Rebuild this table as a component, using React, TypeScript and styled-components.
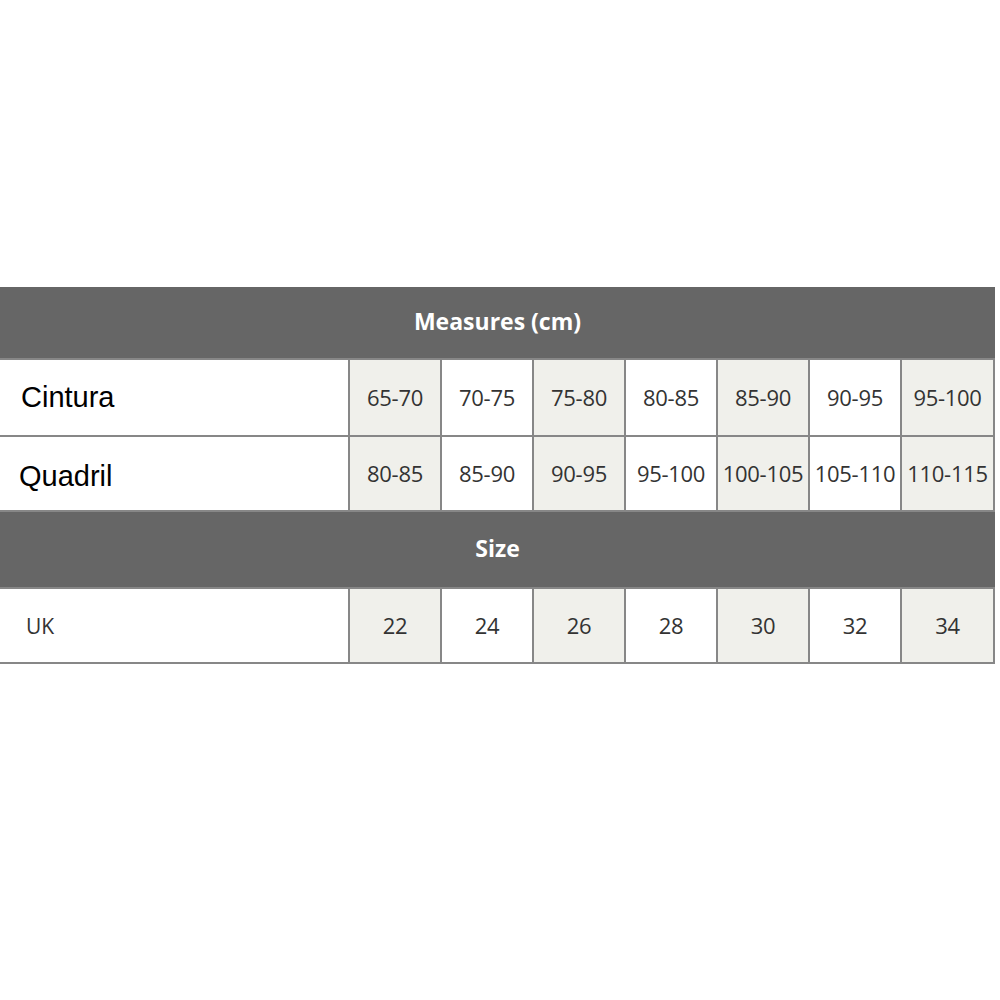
import React from "react";
import styled, { createGlobalStyle } from "styled-components";

const Global = createGlobalStyle`
  html, body { margin: 0; padding: 0; background: #ffffff; }
  body { width: 1000px; height: 1000px; overflow: hidden; }
`;

const Page = styled.div`
  padding-top: 287px;
`;

const Table = styled.div`
  width: 995px;
  box-sizing: border-box;
  display: grid;
  grid-template-columns: 348px repeat(6, 90px) 91px;
  grid-template-rows: 71px 75px 73px 75px 73px;
  gap: 2px;
  padding: 0 2px 2px 0;
  background: #878787;
`;

const BandCell = styled.div`
  grid-column: 1 / -1;
  margin-right: -2px;
  background: #666666;
  display: flex;
  align-items: center;
  justify-content: center;
  font-family: "Open Sans", "Noto Sans", sans-serif;
  font-weight: 700;
  font-size: 23px;
  color: #ffffff;
  padding-bottom: 3px;
`;

const LabelCell = styled.div<{ $small?: boolean; $indent: number; $drop: number }>`
  background: #ffffff;
  display: flex;
  align-items: center;
  padding-left: ${(p) => p.$indent}px;
  padding-top: ${(p) => p.$drop}px;
  font-family: ${(p) =>
    p.$small ? `"Open Sans", "Noto Sans", sans-serif` : `"Liberation Sans", Arial, sans-serif`};
  font-size: ${(p) => (p.$small ? "21px" : "29px")};
  color: ${(p) => (p.$small ? "#333333" : "#000000")};
`;

const ValueCell = styled.div<{ $shaded: boolean }>`
  background: ${(p) => (p.$shaded ? "#f0f0eb" : "#ffffff")};
  display: flex;
  align-items: center;
  justify-content: center;
  font-family: "Open Sans", "Noto Sans", sans-serif;
  font-size: 22px;
  color: #333333;
  white-space: nowrap;
  letter-spacing: -0.3px;
  padding-bottom: 2px;
`;

const rows: { label: string; indent: number; drop: number; values: string[] }[] = [
  { label: "Cintura", indent: 21, drop: 0, values: ["65-70", "70-75", "75-80", "80-85", "85-90", "90-95", "95-100"] },
  { label: "Quadril", indent: 19, drop: 6, values: ["80-85", "85-90", "90-95", "95-100", "100-105", "105-110", "110-115"] },
];

const sizes = ["22", "24", "26", "28", "30", "32", "34"];

export default function App() {
  return (
    <>
      <Global />
      <Page>
        <Table>
          <BandCell>Measures (cm)</BandCell>
          {rows.map((r) => (
            <React.Fragment key={r.label}>
              <LabelCell $indent={r.indent} $drop={r.drop}>
                {r.label}
              </LabelCell>
              {r.values.map((v, i) => (
                <ValueCell key={v + i} $shaded={i % 2 === 0}>
                  {v}
                </ValueCell>
              ))}
            </React.Fragment>
          ))}
          <BandCell>Size</BandCell>
          <LabelCell $small $indent={26} $drop={0}>
            UK
          </LabelCell>
          {sizes.map((v, i) => (
            <ValueCell key={v} $shaded={i % 2 === 0}>
              {v}
            </ValueCell>
          ))}
        </Table>
      </Page>
    </>
  );
}
